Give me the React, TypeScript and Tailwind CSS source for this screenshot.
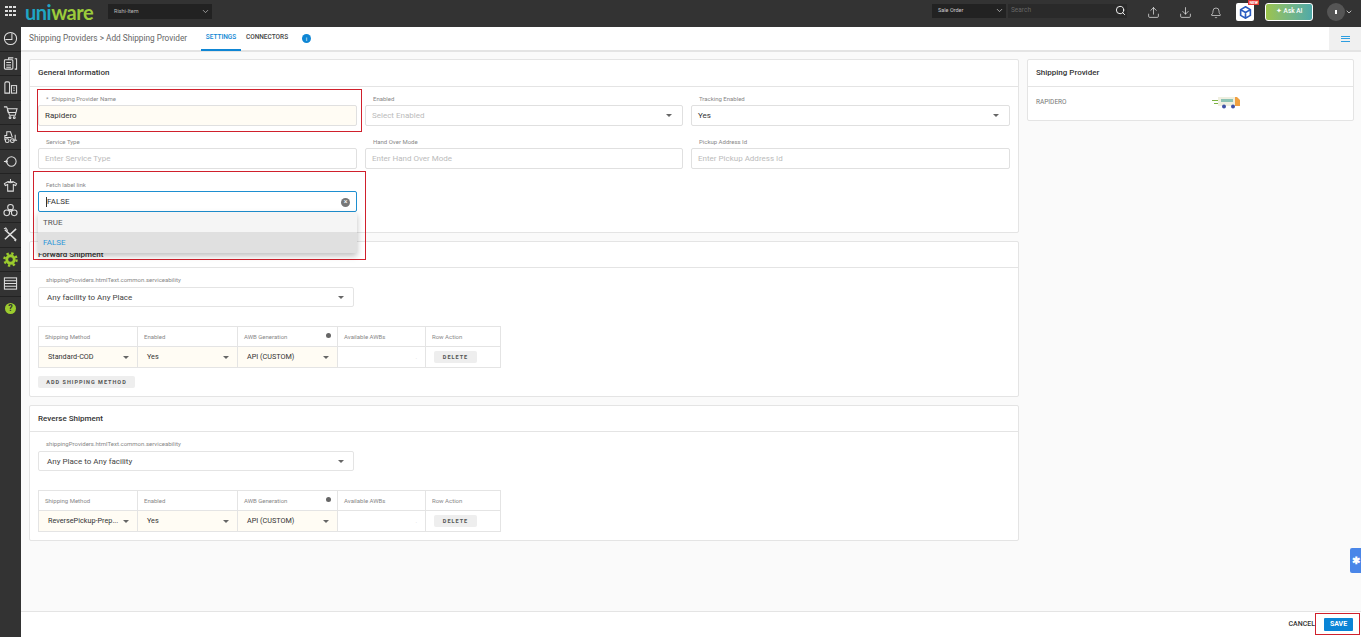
import React from 'react';
import { ChevronDown, Search, Upload, Download, Bell } from 'lucide-react';

const font = "font-['Roboto',sans-serif]";

const Caret = () => (
  <span className="w-0 h-0 border-l-[3px] border-r-[3px] border-t-[3px] border-l-transparent border-r-transparent border-t-[#666] shrink-0" />
);

const RedBox = ({ className }: { className: string }) => (
  <div className={`absolute border border-[#d0202c] pointer-events-none ${className}`} />
);

const Field = ({ label, value, placeholder, select, required, filled, width }: { label: string; value?: string; placeholder?: string; select?: boolean; required?: boolean; filled?: boolean; width: string }) => (
  <div className={width}>
    <div className="h-[16px] pl-[8px] text-[6px] leading-[20px] text-[#888]">
      {required && <span className="mr-[3px]">*</span>}
      {label}
    </div>
    <div className={`h-[21px] flex items-center justify-between pl-[6px] pr-[10px] border border-[#e0e0e0] rounded-[2px] text-[8px] ${filled ? 'bg-[#fffcf4]' : 'bg-white'}`}>
      <span className={value ? 'text-[#333]' : 'text-[#bbb]'}>{value || placeholder}</span>
      {select && <Caret />}
    </div>
  </div>
);

const CellSelect = ({ value }: { value: string }) => (
  <div className="h-full flex items-center justify-between pl-[9px] pr-[8px] bg-[#fffcf4] text-[7.25px] text-[#333]">
    <span>{value}</span>
    <Caret />
  </div>
);

const ShippingTable = ({ method }: { method: string }) => (
  <div className="w-[463px] border-t border-l border-[#e4e4e4] text-[6px] text-[#888]">
    <div className="grid grid-cols-[99px_100px_100px_88px_75px] h-[20px]">
      <div className="border-r border-b border-[#e4e4e4] pl-[6px] flex items-center">Shipping Method</div>
      <div className="border-r border-b border-[#e4e4e4] pl-[6px] flex items-center">Enabled</div>
      <div className="border-r border-b border-[#e4e4e4] pl-[6px] pr-[6px] flex items-center justify-between">
        <span className="mb-[1px]">AWB Generation</span>
        <span className="w-[5px] h-[5px] rounded-full bg-[#666] mb-[2px]" />
      </div>
      <div className="border-r border-b border-[#e4e4e4] pl-[6px] flex items-center">Available AWBs</div>
      <div className="border-r border-b border-[#e4e4e4] pl-[6px] flex items-center">Row Action</div>
    </div>
    <div className="grid grid-cols-[99px_100px_100px_88px_75px] h-[21px]">
      <div className="border-r border-b border-[#e4e4e4]"><CellSelect value={method} /></div>
      <div className="border-r border-b border-[#e4e4e4]"><CellSelect value="Yes" /></div>
      <div className="border-r border-b border-[#e4e4e4]"><CellSelect value="API (CUSTOM)" /></div>
      <div className="border-r border-b border-[#e4e4e4] flex items-center justify-end pr-[8px] text-[#ccc]">·</div>
      <div className="border-r border-b border-[#e4e4e4] flex items-center pl-[8px]">
        <button className="w-[43px] h-[12px] bg-[#eeeeee] rounded-[2px] text-[5.5px] font-bold tracking-[1px] text-[#555]">DELETE</button>
      </div>
    </div>
  </div>
);

const Card = ({ title, className, headerClass, children }: { title: string; className: string; headerClass: string; children: React.ReactNode }) => (
  <div className={`bg-white border border-[#e4e4e4] rounded-[2px] ${className}`}>
    <div className={`flex items-center pl-[8px] border-b border-[#e4e4e4] text-[8px] font-medium text-[#333] ${headerClass}`}>{title}</div>
    {children}
  </div>
);

const ShipmentBody = ({ value, method }: { value: string; method: string }) => (
  <div className="pl-[8px]">
    <div className="pt-[8px] h-[19px] pl-[8px] text-[6px] leading-[7px] text-[#888]">shippingProviders.htmlText.common.serviceability</div>
    <div className="w-[316px] h-[20px] flex items-center justify-between pl-[8px] pr-[9px] pt-[1px] border border-[#e4e4e4] rounded-[2px] text-[8px] text-[#444]">
      <span>{value}</span>
      <Caret />
    </div>
    <div className="mt-[19px]"><ShippingTable method={method} /></div>
  </div>
);

const SideIcon = ({ children }: { children: React.ReactNode }) => (
  <div className="h-[24.5px] flex items-center justify-center border-b border-[#222]">
    <svg width="15" height="15" viewBox="0 0 16 16" fill="none" stroke="#e0e0e0" strokeWidth="1.1">{children}</svg>
  </div>
);

const Sidebar = () => (
  <div className="w-[21px] shrink-0 bg-[#333] flex flex-col">
    <SideIcon><circle cx="8" cy="8" r="6.5" /><path d="M9.5 2.5V9H2.5" /></SideIcon>
    <SideIcon><rect x="1.5" y="4" width="9" height="10" rx="1" /><path d="M3.5 7h5M3.5 9.5h5M3.5 12h5M6 4V2h5M12.5 3h2v11h-2" /></SideIcon>
    <SideIcon><path d="M2 14V3.5Q2 2 3.5 2h2Q7 2 7 3.5V14z" /><rect x="9" y="6" width="5.5" height="8" /><path d="M11 8.5h1.5M11 11h1.5" /></SideIcon>
    <SideIcon><path d="M1 2h3l3 9h6l2-7H5M4.5 5l1 3h8" /><circle cx="7.5" cy="13.5" r="1" /><circle cx="12" cy="13.5" r="1" /></SideIcon>
    <SideIcon><path d="M2 12V7h2V3h4l2 6M2 9h7M10 12h5M13 6v6" /><circle cx="4.5" cy="12.5" r="2" /><circle cx="10" cy="12.5" r="2" /></SideIcon>
    <SideIcon><path d="M1 8h3M3 6.5L4.5 8 3 9.5" /><circle cx="9" cy="8" r="5" /></SideIcon>
    <SideIcon><path d="M8 1v3M5 4L1.5 6l1 2L5 7v7h6V7l2.5 1 1-2L11 4z" /><path d="M5 4q3 2 6 0" /></SideIcon>
    <SideIcon><circle cx="8" cy="4.5" r="3" /><circle cx="4" cy="10.5" r="3" /><circle cx="12" cy="10.5" r="3" /><circle cx="8" cy="8" r="1" /></SideIcon>
    <SideIcon><path d="M2 3l12 11M14 2L2 13" strokeWidth="1.6" /><path d="M1 2l2-1 2 3M12 14l2 1" /></SideIcon>
    <div className="h-[24.5px] flex items-center justify-center border-b border-[#222]">
      <svg width="15" height="15" viewBox="0 0 16 16"><circle cx="8" cy="8" r="4" fill="none" stroke="#9ccc2e" strokeWidth="3" /><circle cx="8" cy="8" r="6.5" fill="none" stroke="#9ccc2e" strokeWidth="2.5" strokeDasharray="2.5 2.6" /></svg>
    </div>
    <SideIcon><rect x="1.5" y="2" width="13" height="12" /><path d="M1.5 5h13M1.5 8h13M1.5 11h13" /></SideIcon>
    <div className="h-[24.5px] flex items-center justify-center">
      <span className="w-[11px] h-[11px] rounded-full bg-[#9ccc2e] text-[#333] text-[9px] font-bold leading-[11px] text-center">?</span>
    </div>
  </div>
);

const TopBar = () => (
  <div className="h-[27px] bg-[#333] flex items-center text-white shrink-0">
    <div className="w-[21px] flex justify-center mb-[5px]">
      <div className="grid grid-cols-3 gap-[1.5px]">
        {Array.from({ length: 9 }).map((_, i) => <span key={i} className="w-[2.5px] h-[2.5px] bg-[#ddd]" />)}
      </div>
    </div>
    <div className="w-[87px] pl-[4px] text-[20px] leading-none tracking-[-0.5px] mb-[4px] font-['Lato',sans-serif]">
      <span className="text-[#1fa5c4] font-bold">uni</span><span className="text-[#9ccb3b] font-bold">ware</span>
    </div>
    <div className="w-[104px] h-[15px] bg-[#222] flex items-center justify-between pl-[6px] pr-[2px] text-[5.5px] text-[#bbb] mb-[5px]">
      <span>Rishi-Item</span>
      <ChevronDown size={9} />
    </div>
    <div className="flex-1" />
    <div className="w-[74px] h-[14px] bg-[#222] flex items-center justify-between pl-[6px] pr-[2px] text-[5.5px] text-[#ccc] mb-[6px]">
      <span>Sale Order</span>
      <ChevronDown size={9} />
    </div>
    <div className="w-[119px] ml-[2px] h-[14px] bg-[#2a2a2a] flex items-center justify-between pl-[3px] pr-[1px] text-[6.5px] text-[#666] mb-[6px]">
      <span>Search</span>
      <Search size={11} className="text-white" />
    </div>
    <div className="w-[20px]" />
    <Upload size={13} strokeWidth={1.2} className="mb-[2px]" />
    <div className="w-[19px]" />
    <Download size={13} strokeWidth={1.2} className="mb-[2px]" />
    <div className="w-[18px]" />
    <Bell size={12} strokeWidth={1.2} className="mb-[2px]" />
    <div className="w-[14px]" />
    <div className="relative w-[18px] h-[18px] bg-white rounded-[2px] flex items-center justify-center mb-[3px]">
      <svg width="13" height="13" viewBox="0 0 16 16" fill="none" stroke="#2a5bbf" strokeWidth="2"><path d="M8 1l6 3.5v7L8 15l-6-3.5v-7L8 1zM2 4.5L8 8l6-3.5M8 8v7" /></svg>
      <span className="absolute -top-[3px] -right-[5px] bg-[#e53935] text-white text-[4px] leading-[5px] px-[1px] font-bold">NEW</span>
    </div>
    <div className="w-[11px]" />
    <div className="w-[48px] h-[18px] rounded-[3px] border border-white bg-gradient-to-r from-[#9cc34a] to-[#4fa9a8] flex items-center justify-center gap-[2px] text-[6.5px] font-medium mb-[4px]">
      <span className="text-[7px]">✦</span>Ask AI
    </div>
    <div className="w-[14px]" />
    <div className="w-[18px] h-[18px] rounded-full bg-[#555] flex items-center justify-center mb-[3px]">
      <span className="w-[1.5px] h-[4px] bg-white" />
    </div>
    <ChevronDown size={8} className="mr-[8px] mb-[3px]" />
  </div>
);

const SubHeader = () => (
  <div className="h-[25px] bg-white border-b-2 border-[#e4e4e4] flex items-center shrink-0">
    <div className="pl-[8px] w-[180px] text-[8.25px] text-[#666] mb-[1px]">Shipping Providers &gt; Add Shipping Provider</div>
    <div className="w-[40px] h-[25px] border-b-2 border-[#0f86d4] text-[#0f86d4] text-[6.5px] font-medium flex items-center justify-center">SETTINGS</div>
    <div className="w-[52px] text-center text-[6.5px] font-medium text-[#444] mb-[1px]">CONNECTORS</div>
    <span className="ml-[9px] w-[9px] h-[9px] rounded-full bg-[#0f86d4] text-white text-[6px] leading-[9px] text-center">i</span>
    <div className="flex-1" />
    <div className="w-[32px] h-full bg-[#f0f0f0] flex flex-col items-center justify-center gap-[1.5px]">
      <span className="w-[9px] h-[1px] bg-[#2d9ee0]" />
      <span className="w-[9px] h-[1px] bg-[#2d9ee0]" />
      <span className="w-[9px] h-[1px] bg-[#2d9ee0]" />
    </div>
  </div>
);

export default function App() {
  return (
    <div className={`relative w-[1361px] h-[637px] overflow-hidden bg-[#fafafa] ${font}`}>
      <TopBar />
      <div className="flex h-[610px]">
        <Sidebar />
        <div className="relative flex-1 flex flex-col min-w-0">
          <SubHeader />
          <div className="flex-1 flex gap-[8px] pl-[8px] pt-[7px]">
            <div className="w-[990px] flex flex-col gap-[8px]">
              <Card title="General Information" className="h-[174px]" headerClass="h-[27px]">
                <div className="pl-[8px] flex flex-col gap-[1px] pt-[2px]">
                  <div className="flex gap-[8px]">
                    <Field width="w-[319px]" label="Shipping Provider Name" value="Rapidero" required filled />
                    <Field width="w-[318px]" label="Enabled" placeholder="Select Enabled" select />
                    <Field width="w-[319px]" label="Tracking Enabled" value="Yes" select />
                  </div>
                  <div className="flex gap-[8px] mt-[5px]">
                    <Field width="w-[319px]" label="Service Type" placeholder="Enter Service Type" />
                    <Field width="w-[318px]" label="Hand Over Mode" placeholder="Enter Hand Over Mode" />
                    <Field width="w-[319px]" label="Pickup Address Id" placeholder="Enter Pickup Address Id" />
                  </div>
                  <div className="relative w-[319px] mt-[5px] z-10">
                    <div className="h-[16px] pl-[8px] text-[6px] leading-[20px] text-[#888]">Fetch label link</div>
                    <div className="h-[21px] flex items-center justify-between pl-[7px] pr-[6px] pt-[1px] border border-[#1e8fd0] rounded-[2px] bg-white text-[8px] text-[#333]">
                      <span className="border-l border-[#333] leading-[10px]">FALSE</span>
                      <span className="w-[9px] h-[9px] rounded-full bg-[#777] text-white text-[7px] leading-[9px] text-center">×</span>
                    </div>
                    <div className="absolute left-0 top-[37px] w-full bg-white shadow-[0_3px_6px_rgba(0,0,0,0.25)] text-[8px]">
                      <div className="h-[20px] flex items-center pl-[5px] pt-[1px] bg-[#f5f5f5] text-[#555]">TRUE</div>
                      <div className="h-[21px] flex items-center pl-[5px] bg-[#e0e0e0] text-[#2f97d8]">FALSE</div>
                    </div>
                  </div>
                </div>
              </Card>
              <Card title="Forward Shipment" className="h-[156px]" headerClass="h-[26px]">
                <ShipmentBody value="Any facility to Any Place" method="Standard-COD" />
                <button className="ml-[8px] mt-[8px] w-[97px] h-[12px] bg-[#eeeeee] rounded-[2px] text-[5.5px] font-bold tracking-[1px] text-[#555] block">ADD SHIPPING METHOD</button>
              </Card>
              <Card title="Reverse Shipment" className="h-[136px]" headerClass="h-[26px]">
                <ShipmentBody value="Any Place to Any facility" method="ReversePickup-Prep..." />
              </Card>
            </div>
            <div className="w-[327px] h-[62px] bg-white border border-[#e4e4e4] rounded-[2px]">
              <div className="h-[27px] flex items-center pl-[8px] border-b border-[#e4e4e4] text-[8px] font-medium text-[#333]">Shipping Provider</div>
              <div className="h-[33px] flex items-center pl-[8px] pb-[2px] text-[6.5px] text-[#777]">
                <span className="w-[175px]">RAPIDERO</span>
                <svg width="29" height="13" viewBox="0 0 29 13">
                  <path d="M7 1h18l3 3v6H7z" fill="#efefe0" />
                  <path d="M24 1h2l3 3v6h-5z" fill="#f0a040" />
                  <path d="M1 4h6v1H1zM3 7h4v1H3z" fill="#7cb342" />
                  <rect x="10" y="3" width="12" height="3" fill="#8cc3b4" />
                  <circle cx="13" cy="10.5" r="2" fill="#3f51a5" />
                  <circle cx="22" cy="10.5" r="2" fill="#3f51a5" />
                </svg>
              </div>
            </div>
          </div>
          <div className="h-[26px] shrink-0 bg-white border-t border-[#e4e4e4] flex items-center justify-end">
            <span className="text-[7px] font-medium text-[#333] mr-[9px]">CANCEL</span>
            <button className="w-[29px] h-[13px] bg-[#0a84d6] rounded-[1px] text-white text-[7px] font-bold mr-[8px]">SAVE</button>
          </div>
        </div>
      </div>
      <RedBox className="left-[37px] top-[89px] w-[325px] h-[43px]" />
      <RedBox className="left-[33px] top-[171px] w-[333px] h-[89px]" />
      <RedBox className="left-[1315px] top-[613px] w-[45px] h-[22px]" />
      <div className="absolute left-[1350px] top-[548px] w-[11px] h-[25px] bg-[#4a86e8] rounded-l-[2px] flex items-center justify-center text-white text-[10px] font-bold">✱</div>
    </div>
  );
}
